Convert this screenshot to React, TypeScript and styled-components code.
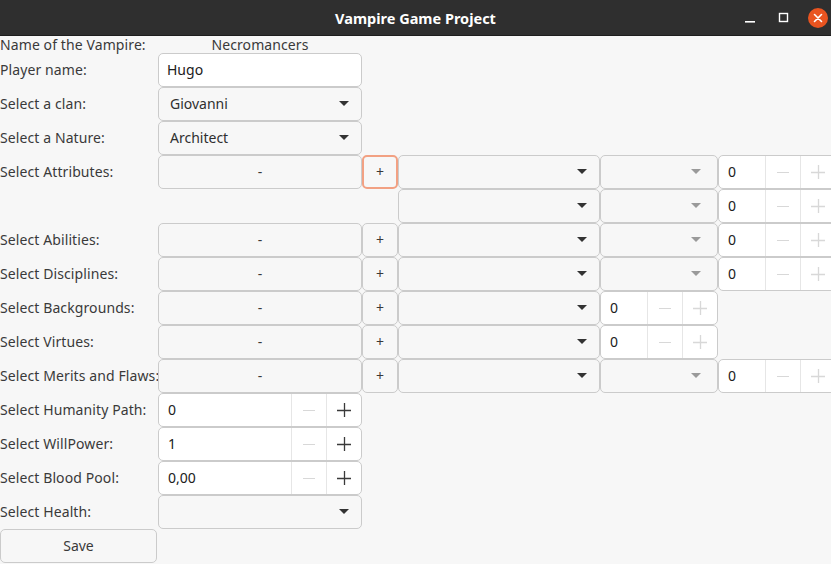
import React from "react";
import styled, { createGlobalStyle, css } from "styled-components";

const GlobalStyle = createGlobalStyle`
  html, body { margin: 0; padding: 0; }
  body { font-family: "Noto Sans", "DejaVu Sans", sans-serif; background: #f7f7f7; }
  * { box-sizing: border-box; }
`;

const Window = styled.div`
  width: 831px;
  height: 564px;
  overflow: hidden;
  background: #f7f7f7;
  display: flex;
  flex-direction: column;
`;

const TitleBar = styled.div`
  height: 36px;
  flex: none;
  background: #2f2f2f;
  border-bottom: 1px solid #1e1e1e;
  display: grid;
  grid-template-columns: 1fr auto 1fr;
  align-items: center;
`;

const Title = styled.div`
  grid-column: 2;
  color: #ffffff;
  font-weight: 700;
  font-size: 14.5px;
`;

const Controls = styled.div`
  grid-column: 3;
  justify-self: end;
  display: flex;
  align-items: center;
  gap: 8px;
`;

const Ctrl = styled.div`
  width: 26px;
  height: 35px;
  display: flex;
  align-items: center;
  justify-content: center;
`;

const Form = styled.div`
  display: grid;
  grid-template-columns: 158px 204px 36px 202px 118px 118px;
  grid-template-rows: 17px repeat(15, 34px);
  overflow: hidden;
  font-size: 14px;
  color: #2f2f2f;
`;

const Label = styled.div<{ $center?: boolean }>`
  display: flex;
  align-items: center;
  justify-content: ${(p) => (p.$center ? "center" : "flex-start")};
  white-space: nowrap;
  color: #3a3a3a;
  letter-spacing: 0.1px;
  padding-bottom: 1px;
  overflow: visible;
`;

const Empty = styled.div``;

const boxBase = css`
  height: 34px;
  border: 1px solid #cbcbcb;
  border-radius: 5px;
  display: flex;
  align-items: center;
  font-size: 14px;
  padding-bottom: 1px;
`;

const Entry = styled.div`
  ${boxBase};
  background: #ffffff;
  color: #202020;
  padding-left: 8px;
  padding-right: 8px;
`;

const Button = styled.div<{ $focused?: boolean }>`
  ${boxBase};
  background: #f7f7f7;
  color: #3a3a3a;
  justify-content: center;
  ${(p) =>
    p.$focused &&
    css`
      border: 2px solid #f2a183;
    `}
`;

const Combo = styled.div<{ $disabled?: boolean }>`
  ${boxBase};
  background: #f7f7f7;
  color: #2f2f2f;
  justify-content: space-between;
  padding-left: 11px;
  padding-right: 12px;
  span.arrow {
    width: 0;
    height: 0;
    border-left: 5px solid transparent;
    border-right: 5px solid transparent;
    border-top: 5px solid ${(p) => (p.$disabled ? "#9a9a9a" : "#333333")};
    margin-right: ${(p) => (p.$disabled ? "4px" : "0")};
  }
`;

const Spin = styled.div`
  ${boxBase};
  background: #ffffff;
  overflow: hidden;
  padding-bottom: 0;
`;

const SpinValue = styled.div`
  flex: 1;
  padding: 0 9px 1px;
  color: #202020;
  white-space: nowrap;
`;

const SpinBtn = styled.div<{ $enabled?: boolean }>`
  width: 35px;
  height: 100%;
  flex: none;
  border-left: 1px solid #e6e6e6;
  display: flex;
  align-items: center;
  justify-content: center;
  color: ${(p) => (p.$enabled ? "#3a3a3a" : "#d8d8d8")};
`;

const Save = styled(Button)`
  margin-right: 1px;
`;

const Minus = () => (
  <svg width="14" height="14" viewBox="0 0 14 14">
    <line x1="1" y1="7.5" x2="13" y2="7.5" stroke="currentColor" strokeWidth="1.2" />
  </svg>
);
const Plus = () => (
  <svg width="16" height="16" viewBox="0 0 16 16">
    <line x1="1" y1="8.5" x2="15" y2="8.5" stroke="currentColor" strokeWidth="1.3" />
    <line x1="8.5" y1="1" x2="8.5" y2="15" stroke="currentColor" strokeWidth="1.3" />
  </svg>
);

const SpinBox = ({ value, plusEnabled }: { value: string; plusEnabled?: boolean }) => (
  <Spin>
    <SpinValue>{value}</SpinValue>
    <SpinBtn>
      <Minus />
    </SpinBtn>
    <SpinBtn $enabled={plusEnabled}>
      <Plus />
    </SpinBtn>
  </Spin>
);

const ComboBox = ({ text, disabled }: { text?: string; disabled?: boolean }) => (
  <Combo $disabled={disabled}>
    <span>{text ?? ""}</span>
    <span className="arrow" />
  </Combo>
);

const App: React.FC = () => (
  <>
    <GlobalStyle />
    <Window>
      <TitleBar>
        <Title>Vampire Game Project</Title>
        <Controls>
          <Ctrl>
            <svg width="12" height="12" viewBox="0 0 12 12">
              <rect x="1" y="9" width="10" height="1.6" fill="#ffffff" />
            </svg>
          </Ctrl>
          <Ctrl>
            <svg width="12" height="12" viewBox="0 0 12 12">
              <rect x="1.5" y="1.5" width="8" height="8" fill="none" stroke="#ffffff" strokeWidth="1.4" />
            </svg>
          </Ctrl>
          <Ctrl>
            <svg width="22" height="22" viewBox="0 0 22 22">
              <circle cx="11" cy="11" r="10" fill="#e95420" />
              <path d="M7.5 7.5 L14.5 14.5 M14.5 7.5 L7.5 14.5" stroke="#ffffff" strokeWidth="1.6" strokeLinecap="round" />
            </svg>
          </Ctrl>
        </Controls>
      </TitleBar>
      <Form>
        <Label>Name of the Vampire:</Label>
        <Label $center>Necromancers</Label>
        <Empty /><Empty /><Empty /><Empty />

        <Label>Player name:</Label>
        <Entry>Hugo</Entry>
        <Empty /><Empty /><Empty /><Empty />

        <Label>Select a clan:</Label>
        <ComboBox text="Giovanni" />
        <Empty /><Empty /><Empty /><Empty />

        <Label>Select a Nature:</Label>
        <ComboBox text="Architect" />
        <Empty /><Empty /><Empty /><Empty />

        <Label>Select Attributes:</Label>
        <Button>-</Button>
        <Button $focused>+</Button>
        <ComboBox />
        <ComboBox disabled />
        <SpinBox value="0" />

        <Empty />
        <Empty />
        <Empty />
        <ComboBox />
        <ComboBox disabled />
        <SpinBox value="0" />

        <Label>Select Abilities:</Label>
        <Button>-</Button>
        <Button>+</Button>
        <ComboBox />
        <ComboBox disabled />
        <SpinBox value="0" />

        <Label>Select Disciplines:</Label>
        <Button>-</Button>
        <Button>+</Button>
        <ComboBox />
        <ComboBox disabled />
        <SpinBox value="0" />

        <Label>Select Backgrounds:</Label>
        <Button>-</Button>
        <Button>+</Button>
        <ComboBox />
        <SpinBox value="0" />
        <Empty />

        <Label>Select Virtues:</Label>
        <Button>-</Button>
        <Button>+</Button>
        <ComboBox />
        <SpinBox value="0" />
        <Empty />

        <Label>Select Merits and Flaws:</Label>
        <Button>-</Button>
        <Button>+</Button>
        <ComboBox />
        <ComboBox disabled />
        <SpinBox value="0" />

        <Label>Select Humanity Path:</Label>
        <SpinBox value="0" plusEnabled />
        <Empty /><Empty /><Empty /><Empty />

        <Label>Select WillPower:</Label>
        <SpinBox value="1" plusEnabled />
        <Empty /><Empty /><Empty /><Empty />

        <Label>Select Blood Pool:</Label>
        <SpinBox value="0,00" plusEnabled />
        <Empty /><Empty /><Empty /><Empty />

        <Label>Select Health:</Label>
        <ComboBox />
        <Empty /><Empty /><Empty /><Empty />

        <Save>Save</Save>
        <Empty /><Empty /><Empty /><Empty /><Empty />
      </Form>
    </Window>
  </>
);

export default App;
